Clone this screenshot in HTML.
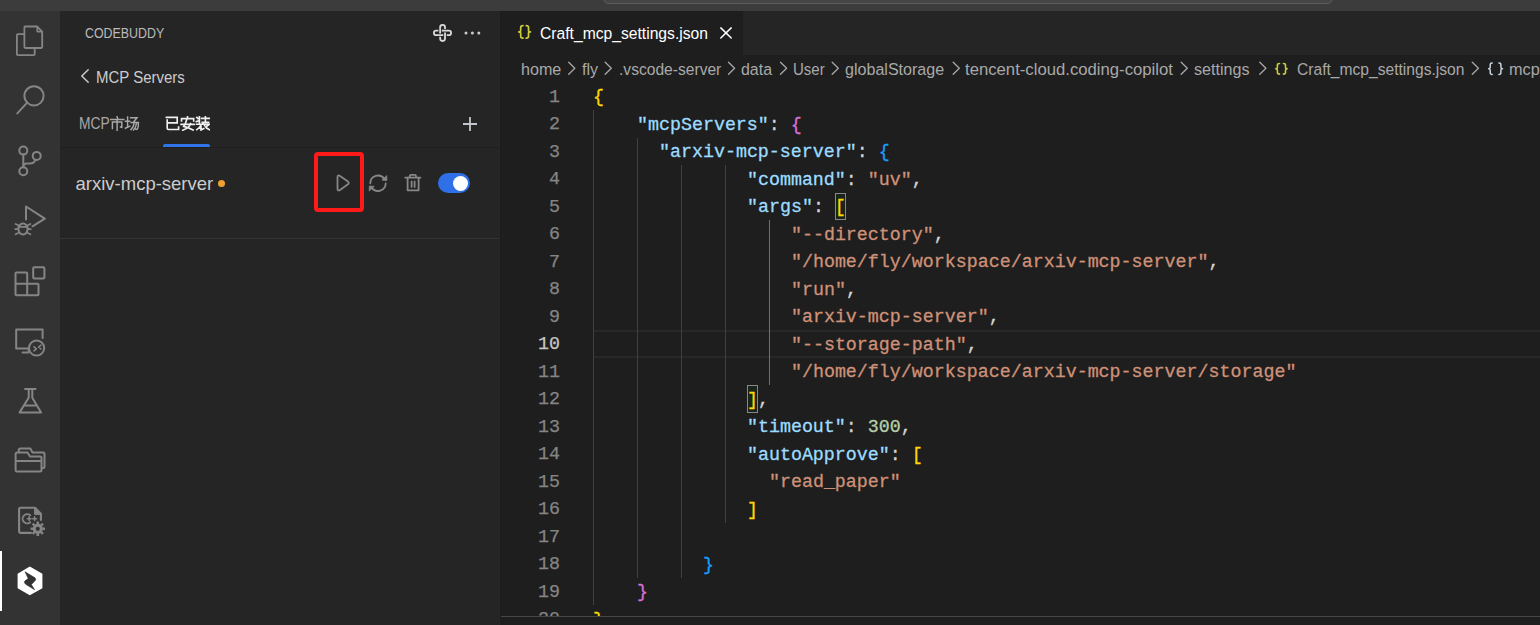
<!DOCTYPE html>
<html><head><meta charset="utf-8">
<style>
*{margin:0;padding:0;box-sizing:border-box}
html,body{width:1540px;height:625px;overflow:hidden;background:#1e1e1e;font-family:"Liberation Sans",sans-serif}
.a{position:absolute}
#title{left:0;top:0;width:1540px;height:11px;background:#3c3c3c}
#search{left:603px;top:-30px;width:730px;height:34px;border:1px solid #5e5e5e;border-radius:6px;background:#454545}
#act{left:0;top:11px;width:60px;height:614px;background:#333333}
#side{left:60px;top:11px;width:440px;height:614px;background:#252526}
#tabs{left:500px;top:11px;width:1040px;height:44px;background:#252526}
#tab{left:500px;top:11px;width:243px;height:44px;background:#1e1e1e}
#crumbs{left:500px;top:55px;width:1040px;height:27.5px;background:#1e1e1e}
#panelb{left:500px;top:616px;width:1040px;height:1px;background:#454545}
#panel{left:500px;top:617px;width:1040px;height:8px;background:#1e1e1e}
.t{position:absolute;white-space:pre;line-height:1}
.code{position:absolute;margin-top:1.5px;left:593px;font-family:"Liberation Mono",monospace;font-size:18.32px;line-height:27.5px;white-space:pre;color:#d4d4d4;-webkit-text-stroke:0.3px currentColor}
.ln{position:absolute;margin-top:1px;left:500px;width:60px;-webkit-text-stroke:0.25px currentColor;text-align:right;font-family:"Liberation Mono",monospace;font-size:18.32px;line-height:27.5px;color:#858585}
.k{color:#9cdcfe}.s{color:#ce9178}.n{color:#b5cea8}.b1{color:#ffd700}.b2{color:#da70d6}.b3{color:#179fff}
.g{position:absolute;width:1px;background:#404040}
.ic{position:absolute}
.cur{color:#c6c6c6}
</style></head><body>
<div id="title" class="a"><div id="search" class="a"></div></div>
<div id="act" class="a"></div>
<svg class="a" style="left:0;top:0" width="60" height="625" viewBox="0 0 60 625" fill="none" stroke="#858585" stroke-width="2" stroke-linejoin="round" stroke-linecap="round">
<!-- explorer -->
<path d="M24 34.1 H17.8 Q16.9 34.1 16.9 35 V54.2 Q16.9 55.1 17.8 55.1 H33.8 Q34.7 55.1 34.7 54.2 V48.2" stroke-width="1.8"/>
<path d="M25.3 26.5 H37 L42.2 31.7 V47.1 Q42.2 48 41.3 48 H25.3 Q24.4 48 24.4 47.1 V27.4 Q24.4 26.5 25.3 26.5 Z" stroke-width="1.8"/>
<path d="M37.2 26.8 V31.6 H42" stroke-width="1.6"/>
<!-- search -->
<circle cx="34" cy="95.8" r="9.6"/>
<path d="M27.2 102.6 L17.3 113.4"/>
<!-- scm -->
<circle cx="23.3" cy="150.6" r="4"/>
<circle cx="23.3" cy="171.3" r="4"/>
<circle cx="36.7" cy="155.9" r="4"/>
<path d="M23.3 154.6 V167.3"/>
<path d="M35.5 159.7 Q34 163.6 30 163.6 H27 Q23.3 163.6 23.3 167"/>
<!-- debug -->
<path d="M26 219.5 V206.5 L44.8 218.6 L32.5 226.3"/>
<ellipse cx="23" cy="229" rx="4.6" ry="5.6"/>
<path d="M18.6 226.8 H27.4 M15.6 224 L18.2 225.2 M30.4 224 L27.8 225.2 M15.3 229.2 H18.3 M30.7 229.2 H27.7 M15.6 234.2 L18.2 233 M30.4 234.2 L27.8 233" stroke-width="1.8"/>
<!-- extensions -->
<path d="M16.5 272.5 H26.2 Q27.2 272.5 27.2 273.5 V283.8 H37.5 Q38.5 283.8 38.5 284.8 V294.3 Q38.5 295.2 37.5 295.2 H16.5 Q15.5 295.2 15.5 294.3 V273.5 Q15.5 272.5 16.5 272.5 Z M15.5 283.8 H27.2 V295.2"/>
<rect x="33.2" y="267.2" width="11.2" height="11.2" rx="1"/>
<!-- remote -->
<path d="M42.6 338 V329.6 H16.2 V348.6 H28.7 V352.6 H22.5"/>
<circle cx="36.6" cy="348" r="7.6"/>
<path d="M34 346.8 L36.4 348.8 L34 350.8 M41 345 L38.6 347 L41 349" stroke-width="1.6"/>
<!-- flask -->
<path d="M25 389 H35.6 M28.7 389.5 V397.8 L19.6 412.4 H41.1 L32.3 397.8 V389.5 M24.6 405.6 H36.2"/>
<!-- folders -->
<path d="M17 452.5 H27.5 L30 456.5 H40 Q41.5 456.5 41.5 458 V470 Q41.5 471.5 40 471.5 H17 Q15.6 471.5 15.6 470 V454 Q15.6 452.5 17 452.5 Z M15.6 461 H41.5"/>
<path d="M18.8 452 V450 Q18.8 448.5 20.3 448.5 H30.3 L32.5 452.5 H43 Q44.5 452.5 44.5 454 V466.5 Q44.5 468 43 468 H41.8"/>
<!-- cpp gear -->
<path d="M31 532.9 H20.4 Q19.1 532.9 19.1 531.6 V509.1 Q19.1 507.8 20.4 507.8 H35 L40.9 513.7 V520" stroke-width="2.1"/>
<path d="M34.6 507.6 V514.4 H41.4 Z" fill="#858585" stroke-width="1"/>
<path d="M30.2 515.3 A4.6 4.6 0 1 0 30.2 522.3" stroke-width="1.9"/>
<path d="M27.3 518.7 H31.1 M29.2 516.8 V520.6 M32.7 518.7 H36.5 M34.6 516.8 V520.6" stroke-width="1.5"/>
<circle cx="37.8" cy="528.8" r="3.6" stroke-width="3"/>
<path d="M37.8 521.6 V524 M37.8 533.6 V536 M30.6 528.8 H33 M42.6 528.8 H45 M32.7 523.7 L34.4 525.4 M41.2 532.2 L42.9 533.9 M42.9 523.7 L41.2 525.4 M34.4 532.2 L32.7 533.9" stroke-width="2.6" stroke-linecap="butt"/>
</svg>
<div class="a" style="left:0;top:551px;width:2px;height:60px;background:#ffffff"></div>
<svg class="a" style="left:0;top:0" width="60" height="625" viewBox="0 0 60 625">
<path d="M29.8 567.6 L41.5 574.3 V587.7 L29.8 594.3 L18.5 587.7 V574.3 Z" fill="#ffffff" stroke="#ffffff" stroke-width="1.8" stroke-linejoin="round"/>
<path d="M25 571.8 L35 577.8 Q36.4 579 35.2 580.6 L31.4 584.6 L34.6 589.8 L25.7 584.3 Q23.5 582.6 24.8 581 L28.2 578.5 Z" fill="#333333" stroke="#333333" stroke-width="0.6" stroke-linejoin="round"/>
</svg>

<div id="side" class="a"></div>
<div class="a" style="left:499px;top:11px;width:1px;height:614px;background:#272727"></div>
<div class="t" style="left:85px;top:26.15px;font-size:14px;color:#bbbbbb;transform:scaleX(0.886);transform-origin:0 0">CODEBUDDY</div>
<svg class="a" style="left:0;top:0" width="500" height="250" viewBox="0 0 500 250" fill="none" stroke-linecap="round" stroke-linejoin="round">
<rect x="433.9" y="30.7" width="17.2" height="4.4" rx="2.2" stroke="#d8d8d8" stroke-width="1.8"/>
<rect x="440.15" y="24.9" width="4.85" height="16.1" rx="2.4" stroke="#d8d8d8" stroke-width="1.8"/>
<g stroke-linecap="butt"><path d="M440.15 28.8 V32.6 M445 33.2 V37" stroke="#252526" stroke-width="3.4"/>
<path d="M440.15 28.4 V33 M445 32.8 V37.4" stroke="#d8d8d8" stroke-width="1.8"/>
<path d="M443.2 30.7 H446.8 M438.3 35.1 H441.9" stroke="#252526" stroke-width="3.4"/>
<path d="M442.8 30.7 H447.2 M437.9 35.1 H442.3" stroke="#d8d8d8" stroke-width="1.8"/></g>
<circle cx="466" cy="33" r="1.5" fill="#cccccc"/><circle cx="472.4" cy="33" r="1.5" fill="#cccccc"/><circle cx="478.8" cy="33" r="1.5" fill="#cccccc"/>
<path d="M88.2 69.8 L81.8 76 L88.2 82.2" stroke="#cccccc" stroke-width="1.5"/>
<path d="M463 124 H477 M470 117 V131" stroke="#c3c6cc" stroke-width="1.8" stroke-linecap="butt"/>
</svg>
<div class="t" style="left:95.7px;top:69.24px;font-size:16.25px;color:#cccccc;transform:scaleX(0.922);transform-origin:0 0">MCP Servers</div>
<div class="t" style="left:78.8px;top:115.14px;font-size:16.25px;color:#a8a8a8;transform:scaleX(0.85);transform-origin:0 0">MCP</div>
<svg class="a" style="left:110px;top:116px" width="30" height="15" viewBox="0 0 30 15" fill="none" stroke="#a8a8a8" stroke-width="1.45" stroke-linecap="square">
<path d="M7 0.5 L7.6 2.3 M0.7 3.4 H13.8 M2.4 6 V12.6 M2.4 6 H11.8 V11.3 L10.5 11 M7.1 3.4 V14.5"/>
<g transform="translate(15,0)"><path d="M0.5 5.3 H4.6 M2.6 1 V11.3 M0.4 12.2 L4.8 10.2 M5.6 1.8 H12 L8.4 6.2 M6 6.4 H13.4 Q13.4 13.2 11.6 13.4 L10.6 13 M9.2 6.6 Q8.8 10.8 6 13.6 M11.6 6.8 Q11.2 11.2 8.4 14"/></g>
</svg>
<svg class="a" style="left:165px;top:116px" width="45" height="15" viewBox="0 0 45 15" fill="none" stroke="#f0f0f0" stroke-width="1.65" stroke-linecap="square">
<path d="M1.4 1.3 H12.2 V6.9 H2.2 M2.2 4 V12.2 Q2.2 13.5 3.6 13.5 H13.6 V11"/>
<g transform="translate(15.5,0)"><path d="M7 0.3 V1.8 M1 4.8 V2.6 H13.2 V4.8 M6 4.2 Q5.2 7.6 3.2 10.4 Q8 11.6 12.6 14 M10 7.6 Q9 12 2.2 14.2 M0.6 8.4 H13.6"/></g>
<g transform="translate(31,0)"><path d="M0.8 1.4 L2 2.6 M3.4 0.4 V6.8 M0.4 5.6 L3.4 4.4 M5.6 2.4 H13.2 M9.4 0.4 V6.4 M6.2 6.4 H12.6 M0.5 8.2 H13.6 M7 6.8 V8.2 M5.2 8.6 Q4 11.8 0.8 13.6 M5 10.8 V14 L7.8 12.6 M8.2 9 Q10 12.6 13.6 13.8 M11 10 L12.6 8.8"/></g>
</svg>
<div class="a" style="left:163px;top:144px;width:47px;height:3px;background:#2f74e8;border-radius:2px 2px 0 0"></div>
<div class="a" style="left:60px;top:147px;width:439px;height:1px;background:#1f1f1f"></div>
<div class="t" style="left:75.5px;top:175.1px;font-size:18.5px;color:#cccccc">arxiv-mcp-server</div>
<div class="a" style="left:218px;top:179.8px;width:7px;height:7px;border-radius:50%;background:#f0a030"></div>
<div class="a" style="left:314px;top:151.7px;width:50px;height:60.3px;border:4px solid #ff1a1a;border-radius:4px"></div>
<svg class="a" style="left:0;top:0" width="500" height="250" viewBox="0 0 500 250" fill="none" stroke="#878787" stroke-width="1.8" stroke-linecap="round" stroke-linejoin="round">
<path d="M337.5 177.3 Q337.5 174.3 340 175.9 L347.6 181.2 Q350 182.9 347.6 184.6 L340 189.9 Q337.5 191.5 337.5 188.5 Z"/>
<path d="M370.3 183.3 A7.7 7.7 0 0 1 384.3 178.9"/>
<path d="M385.7 183.3 A7.7 7.7 0 0 1 371.7 187.7"/>
<path d="M386.7 176 L386.9 180.4 L382.4 180.1 Z" fill="#878787" stroke-width="0.9"/>
<path d="M369.3 190.6 L369.3 186.1 L373.8 186.4 Z" fill="#878787" stroke-width="0.9"/>
<path d="M405.2 177.6 H420.4 M409.8 177.3 V176 Q409.8 174.9 411 174.9 H414.8 Q416 174.9 416 176 V177.3 M407.6 178 V190.3 H418.6 V178 M411.6 181.4 V186.9 M414.6 181.4 V186.9"/>
</svg>
<div class="a" style="left:438px;top:173px;width:32px;height:20px;border-radius:10px;background:#2f6fe8"></div>
<div class="a" style="left:452.6px;top:175.8px;width:15.4px;height:15.4px;border-radius:50%;background:#ffffff"></div>
<div class="a" style="left:60px;top:238px;width:439px;height:1px;background:#333333"></div>

<div id="tabs" class="a"></div>
<div id="tab" class="a"></div>
<div id="crumbs" class="a"></div>
<svg class="a" style="left:0;top:0" width="1540" height="90" viewBox="0 0 1540 90">
<path d="M523.00 25.60 Q520.69 25.60 520.69 27.49 V30.39 Q520.69 31.90 518.80 31.90 Q520.69 31.90 520.69 33.41 V36.31 Q520.69 38.20 523.00 38.20 M526.20 25.60 Q528.51 25.60 528.51 27.49 V30.39 Q528.51 31.90 530.40 31.90 Q528.51 31.90 528.51 33.41 V36.31 Q528.51 38.20 526.20 38.20" stroke="#cbcb41" stroke-width="1.7" fill="none" stroke-linecap="round" stroke-linejoin="round"/>
<path d="M1279.50 63.50 Q1277.41 63.50 1277.41 65.09 V67.53 Q1277.41 68.80 1275.70 68.80 Q1277.41 68.80 1277.41 70.07 V72.51 Q1277.41 74.10 1279.50 74.10 M1283.40 63.50 Q1285.49 63.50 1285.49 65.09 V67.53 Q1285.49 68.80 1287.20 68.80 Q1285.49 68.80 1285.49 70.07 V72.51 Q1285.49 74.10 1283.40 74.10" stroke="#cbcb41" stroke-width="1.6" fill="none" stroke-linecap="round" stroke-linejoin="round"/>
<path d="M1492.20 63.00 Q1490.22 63.00 1490.22 64.72 V67.37 Q1490.22 68.75 1488.60 68.75 Q1490.22 68.75 1490.22 70.13 V72.78 Q1490.22 74.50 1492.20 74.50 M1498.90 63.00 Q1500.88 63.00 1500.88 64.72 V67.37 Q1500.88 68.75 1502.50 68.75 Q1500.88 68.75 1500.88 70.13 V72.78 Q1500.88 74.50 1498.90 74.50" stroke="#c5d4e0" stroke-width="1.5" fill="none" stroke-linecap="round" stroke-linejoin="round"/>
<path d="M720.8 27.9 L731.2 38 M731.2 27.9 L720.8 38" stroke="#ffffff" stroke-width="1.5" stroke-linecap="round"/>
<path d="M568.7 62.3 L574.8 68.3 L568.7 74.3 M605.2 62.3 L611.3 68.3 L605.2 74.3 M728.5 62.3 L734.6 68.3 L728.5 74.3 M780.5 62.3 L786.6 68.3 L780.5 74.3 M832.2 62.3 L838.3 68.3 L832.2 74.3 M953.2 62.3 L959.3 68.3 L953.2 74.3 M1181.2 62.3 L1187.3 68.3 L1181.2 74.3 M1259.8 62.3 L1265.9 68.3 L1259.8 74.3 M1472.3 62.3 L1478.4 68.3 L1472.3 74.3" stroke="#a8a8a8" stroke-width="1.3" fill="none" stroke-linecap="round" stroke-linejoin="round"/>
</svg>

<div class="t" style="left:540.00px;top:24.94px;font-size:16.25px;color:#ffffff;transform:scaleX(0.9637);transform-origin:0 0">Craft_mcp_settings.json</div>
<div class="t" style="left:520.60px;top:60.74px;font-size:16.25px;color:#a9a9a9;transform:scaleX(0.9911);transform-origin:0 0">home</div>
<div class="t" style="left:581.80px;top:60.74px;font-size:16.25px;color:#a9a9a9;transform:scaleX(0.9908);transform-origin:0 0">fly</div>
<div class="t" style="left:618.50px;top:60.74px;font-size:16.25px;color:#a9a9a9;transform:scaleX(0.9600);transform-origin:0 0">.vscode-server</div>
<div class="t" style="left:741.00px;top:60.74px;font-size:16.25px;color:#a9a9a9;transform:scaleX(0.9798);transform-origin:0 0">data</div>
<div class="t" style="left:793.00px;top:60.74px;font-size:16.25px;color:#a9a9a9;transform:scaleX(0.9239);transform-origin:0 0">User</div>
<div class="t" style="left:844.80px;top:60.74px;font-size:16.25px;color:#a9a9a9;transform:scaleX(0.9890);transform-origin:0 0">globalStorage</div>
<div class="t" style="left:965.00px;top:60.74px;font-size:16.25px;color:#a9a9a9;transform:scaleX(1.0274);transform-origin:0 0">tencent-cloud.coding-copilot</div>
<div class="t" style="left:1193.50px;top:60.74px;font-size:16.25px;color:#a9a9a9;transform:scaleX(0.9907);transform-origin:0 0">settings</div>
<div class="t" style="left:1297.00px;top:60.74px;font-size:16.25px;color:#a9a9a9;transform:scaleX(0.9608);transform-origin:0 0">Craft_mcp_settings.json</div>
<div class="t" style="left:1509.00px;top:60.74px;font-size:16.25px;color:#a9a9a9;transform:scaleX(1.0001);transform-origin:0 0">mcpServers</div>
<!--CODE-->
<div class="a" style="left:835px;top:192.5px;width:11px;height:27.5px;border:1px solid #888;background:rgba(0,100,0,0.1)"></div>
<div class="a" style="left:747px;top:385px;width:11px;height:27.5px;border:1px solid #888;background:rgba(0,100,0,0.1)"></div>
<div class="a" style="left:593px;top:330px;width:947px;height:27.5px;border-top:2px solid #282828;border-bottom:2px solid #282828"></div>
<div class="g" style="left:593.00px;top:110.00px;height:495.00px"></div>
<div class="g" style="left:636.98px;top:137.50px;height:440.00px"></div>
<div class="g" style="left:680.97px;top:165.00px;height:412.50px"></div>
<div class="g" style="left:724.95px;top:165.00px;height:357.50px"></div>
<div class="g" style="left:768.94px;top:220.00px;height:165.00px;background:#707070"></div>
<div class="ln" style="top:82.50px">1</div>
<div class="code" style="top:82.50px;left:593.00px"><span class="b1">{</span></div>
<div class="ln" style="top:110.00px">2</div>
<div class="code" style="top:110.00px;left:636.98px"><span class="k">"mcpServers"</span>: <span class="b2">{</span></div>
<div class="ln" style="top:137.50px">3</div>
<div class="code" style="top:137.50px;left:658.98px"><span class="k">"arxiv-mcp-server"</span>: <span class="b3">{</span></div>
<div class="ln" style="top:165.00px">4</div>
<div class="code" style="top:165.00px;left:746.94px"><span class="k">"command"</span>: <span class="s">"uv"</span>,</div>
<div class="ln" style="top:192.50px">5</div>
<div class="code" style="top:192.50px;left:746.94px"><span class="k">"args"</span>: <span class="b1 bm">[</span></div>
<div class="ln" style="top:220.00px">6</div>
<div class="code" style="top:220.00px;left:790.93px"><span class="s">"--directory"</span>,</div>
<div class="ln" style="top:247.50px">7</div>
<div class="code" style="top:247.50px;left:790.93px"><span class="s">"/home/fly/workspace/arxiv-mcp-server"</span>,</div>
<div class="ln" style="top:275.00px">8</div>
<div class="code" style="top:275.00px;left:790.93px"><span class="s">"run"</span>,</div>
<div class="ln" style="top:302.50px">9</div>
<div class="code" style="top:302.50px;left:790.93px"><span class="s">"arxiv-mcp-server"</span>,</div>
<div class="ln cur" style="top:330.00px">10</div>
<div class="code" style="top:330.00px;left:790.93px"><span class="s">"--storage-path"</span>,</div>
<div class="ln" style="top:357.50px">11</div>
<div class="code" style="top:357.50px;left:790.93px"><span class="s">"/home/fly/workspace/arxiv-mcp-server/storage"</span></div>
<div class="ln" style="top:385.00px">12</div>
<div class="code" style="top:385.00px;left:746.94px"><span class="b1 bm">]</span>,</div>
<div class="ln" style="top:412.50px">13</div>
<div class="code" style="top:412.50px;left:746.94px"><span class="k">"timeout"</span>: <span class="n">300</span>,</div>
<div class="ln" style="top:440.00px">14</div>
<div class="code" style="top:440.00px;left:746.94px"><span class="k">"autoApprove"</span>: <span class="b1">[</span></div>
<div class="ln" style="top:467.50px">15</div>
<div class="code" style="top:467.50px;left:768.94px"><span class="s">"read_paper"</span></div>
<div class="ln" style="top:495.00px">16</div>
<div class="code" style="top:495.00px;left:746.94px"><span class="b1">]</span></div>
<div class="ln" style="top:522.50px">17</div>
<div class="ln" style="top:550.00px">18</div>
<div class="code" style="top:550.00px;left:702.96px"><span class="b3">}</span></div>
<div class="ln" style="top:577.50px">19</div>
<div class="code" style="top:577.50px;left:636.98px"><span class="b2">}</span></div>
<div class="ln" style="top:605.00px">20</div>
<div class="code" style="top:605.00px;left:593.00px"><span class="b1">}</span></div>
<!--/CODE-->
<div id="panelb" class="a"></div>
<div class="a" style="left:500px;top:11px;width:1px;height:614px;background:#1c1c1c"></div>
<div id="panel" class="a"></div>
</body></html>
